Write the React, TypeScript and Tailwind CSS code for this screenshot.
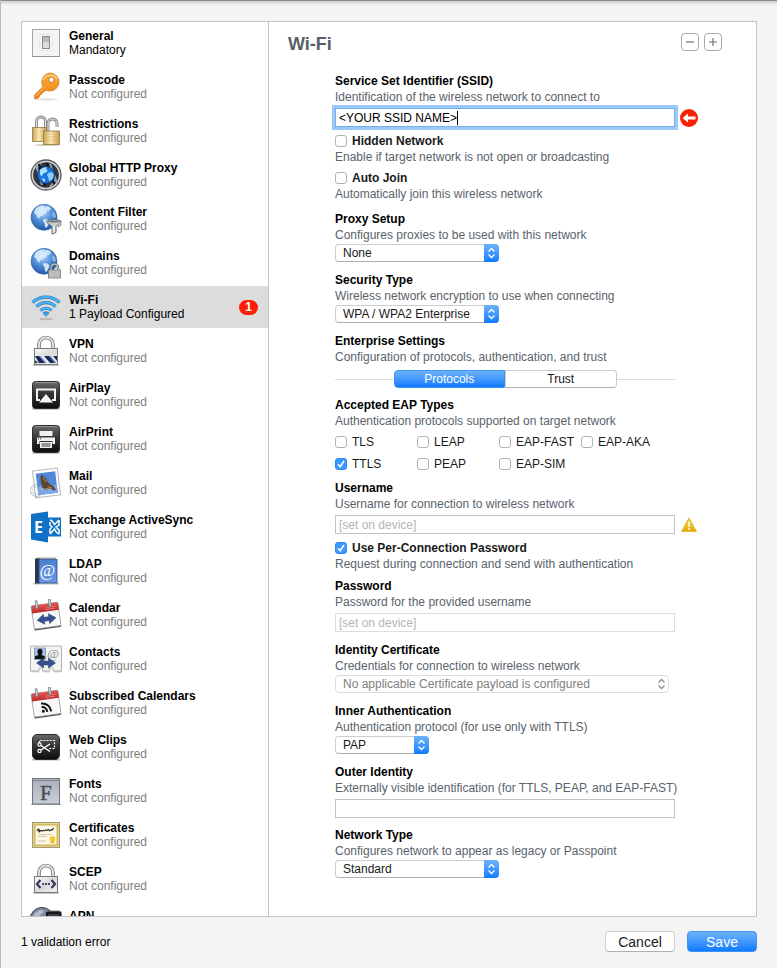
import React, { useState } from 'react';

const Svg = ({ children }: { children: React.ReactNode }) => (
  <svg viewBox="0 0 32 32" className="w-8 h-8 shrink-0" aria-hidden="true">
    {children}
  </svg>
);

// gradients shared by all of the payload icons
const IconDefs = () => (
  <svg className="absolute w-0 h-0" aria-hidden="true">
    <defs>
      <linearGradient id="key" x1="0" y1="0" x2="0" y2="1">
        <stop offset="0" stopColor="#fbb040" />
        <stop offset="1" stopColor="#f07f09" />
      </linearGradient>
      <linearGradient id="brass" x1="0" y1="0" x2="1" y2="0">
        <stop offset="0" stopColor="#c9a256" />
        <stop offset="0.45" stopColor="#fbe9b8" />
        <stop offset="1" stopColor="#c59b50" />
      </linearGradient>
      <linearGradient id="steel" x1="0" y1="0" x2="1" y2="1">
        <stop offset="0" stopColor="#fdfdfd" />
        <stop offset="0.5" stopColor="#d9d9da" />
        <stop offset="1" stopColor="#f4f4f4" />
      </linearGradient>
      <linearGradient id="black" x1="0" y1="0" x2="0" y2="1">
        <stop offset="0" stopColor="#6b6b6b" />
        <stop offset="0.45" stopColor="#353535" />
        <stop offset="1" stopColor="#0c0c0c" />
      </linearGradient>
      <radialGradient id="globe" cx="0.45" cy="0.3" r="0.75">
        <stop offset="0" stopColor="#b5d8f7" />
        <stop offset="0.45" stopColor="#5594dc" />
        <stop offset="1" stopColor="#1a4f9f" />
      </radialGradient>
      <linearGradient id="wifi" x1="0" y1="0" x2="0" y2="1">
        <stop offset="0" stopColor="#2a8fe0" />
        <stop offset="1" stopColor="#53b5f7" />
      </linearGradient>
      <linearGradient id="book" x1="0" y1="0" x2="0" y2="1">
        <stop offset="0" stopColor="#4a7fd0" />
        <stop offset="1" stopColor="#6a9ae6" />
      </linearGradient>
      <linearGradient id="red" x1="0" y1="0" x2="0" y2="1">
        <stop offset="0" stopColor="#e05a58" />
        <stop offset="1" stopColor="#c02a2c" />
      </linearGradient>
      <linearGradient id="fonts" x1="0" y1="0" x2="0" y2="1">
        <stop offset="0" stopColor="#a9b0b9" />
        <stop offset="1" stopColor="#c9ced6" />
      </linearGradient>
      <linearGradient id="warn" x1="0" y1="0" x2="0" y2="1">
        <stop offset="0" stopColor="#fbe04a" />
        <stop offset="1" stopColor="#e3a70c" />
      </linearGradient>
    </defs>
  </svg>
);

const Globe = () => (
  <>
    <circle cx="14" cy="14.3" r="13" fill="url(#globe)" stroke="#2a5fa8" strokeWidth="0.6" />
    <path
      d="M5 6.500c2-2.500 5-4 8-4.300l2 1.300 3-.5 3 2-1 2.500-3 .5-1 2.500-2.500.5-1 2-2.500.5-.5 2-2-1-1.500-3-2-1.500z"
      fill="#e3f1fc"
      opacity="0.8"
    />
    <path d="M14 16l3.500.5 2 2-1 3-2 3.500-1.500-1-.5-4-1.500-2z" fill="#eaf5fd" opacity="0.85" />
    <path d="M23 8l2 2 1 4-2 1-2-3z" fill="#b4d5f3" opacity="0.6" />
  </>
);

const DarkTile = ({ children }: { children: React.ReactNode }) => (
  <Svg>
    <rect x="2" y="29" width="28" height="2" rx="1" fill="#c9c9c9" />
    <rect x="2.500" y="2.500" width="27" height="27" rx="3" fill="url(#black)" stroke="#2c2c2c" />
    <path d="M5 3.500h22" stroke="#a0a0a0" strokeWidth="0.8" />
    {children}
  </Svg>
);

const Padlock = ({ children }: { children: React.ReactNode }) => (
  <Svg>
    <rect x="3" y="29" width="26" height="2" rx="1" fill="#c4c4c4" />
    <path d="M9 14V9.500a7 7 0 0 1 14 0V14" fill="none" stroke="#77797c" strokeWidth="3.600" />
    <path d="M9 14V9.500a7 7 0 0 1 14 0V14" fill="none" stroke="#e4e5e6" strokeWidth="1.800" />
    <rect x="4.500" y="13.500" width="23" height="16" fill="url(#steel)" stroke="#77787a" />
    {children}
  </Svg>
);

const CalendarBase = ({ children }: { children: React.ReactNode }) => (
  <Svg>
    <g transform="rotate(-8 16 16)">
      <rect x="2.500" y="27" width="27" height="3" rx="1" fill="#4d4d4d" />
      <rect x="2.500" y="5" width="27" height="23.500" rx="1" fill="#f8f8f8" stroke="#9a9a9a" strokeWidth="0.8" />
      <path d="M2.500 6a1 1 0 0 1 1-1h25a1 1 0 0 1 1 1v6.500h-27z" fill="url(#red)" />
      <path d="M18 8.500h8M16 10.500h10" stroke="#e58d8b" strokeWidth="0.8" />
      <path d="M8 1.500v6M21.500 1.500v6" stroke="#75848f" strokeWidth="2.800" strokeLinecap="round" />
      <path d="M8 1.500v5.500M21.500 1.500v5.500" stroke="#d5e0e7" strokeWidth="1.200" strokeLinecap="round" />
      {children}
    </g>
  </Svg>
);

const doubleArrow = 'M0 5l7-5v3h5V0l7 5-7 5V7H7v3z';

const icons: Record<string, React.ReactNode> = {
  general: (
    <Svg>
      <rect x="2.500" y="2.500" width="27" height="27" fill="#f3f4f5" stroke="#a3a5a7" />
      <path d="M2 29.500h28" stroke="#8f9193" />
      <rect x="10" y="7.500" width="12" height="16" rx="1" fill="#fdfdfd" stroke="#dcdddd" strokeWidth="0.8" />
      <rect x="12.500" y="9.500" width="7" height="12" fill="#dcdddf" stroke="#85878a" />
      <path d="M13 10h6v5h-6z" fill="#b9bbbf" />
    </Svg>
  ),
  passcode: (
    <Svg>
      <ellipse cx="17" cy="28.500" rx="11" ry="1.200" fill="#e3e3e3" />
      <path
        d="M20 2a9 9 0 0 1 0 18c-1.500 0-3-.3-4-1l-2 2-2 .3-.3 2.200-2.200.3-.2 2.200-1.800 1.500-3 .3.200-4L13 15.500A9 9 0 0 1 20 2z"
        fill="url(#key)"
        stroke="#d07a1a"
        strokeWidth="0.8"
      />
      <path d="M5.500 25.500L14.500 16" stroke="#fcd08a" strokeWidth="0.9" />
      <path d="M13 9a7.500 6 0 0 1 14-1" fill="none" stroke="#fdd594" strokeWidth="1.400" />
      <circle cx="21.500" cy="8.800" r="2.700" fill="#fff" stroke="#c9741a" />
    </Svg>
  ),
  restrictions: (
    <Svg>
      <ellipse cx="17" cy="30" rx="13" ry="1" fill="#d5d0c6" />
      <path d="M6.500 13V6.500a4.500 4.500 0 0 1 9 0V13" fill="none" stroke="#73767c" strokeWidth="2.800" />
      <path d="M6.500 13V6.500a4.500 4.500 0 0 1 9 0V13" fill="none" stroke="#e7e8ea" strokeWidth="1.200" />
      <rect x="2.500" y="12.500" width="14" height="14" fill="url(#brass)" stroke="#9a7b3c" strokeWidth="0.8" />
      <path d="M18 17V8.500a4.500 4.500 0 0 1 9 0V12" fill="none" stroke="#73767c" strokeWidth="2.800" />
      <path d="M18 17V8.500a4.500 4.500 0 0 1 9 0V12" fill="none" stroke="#e7e8ea" strokeWidth="1.200" />
      <rect x="13.500" y="16" width="16" height="13.500" fill="url(#brass)" stroke="#9a7b3c" strokeWidth="0.8" />
      <path d="M14 19h15M14 22h15M14 25h15" stroke="#c8a45c" strokeWidth="0.4" />
    </Svg>
  ),
  proxy: (
    <Svg>
      <circle cx="16" cy="16" r="15" fill="#33373d" stroke="#5a5c5f" strokeWidth="1.300" />
      <circle cx="16" cy="16" r="13.600" fill="none" stroke="#d4d6d8" strokeWidth="1.500" />
      <path d="M6 6l6 20M20 5l7 19M11 4l-5 6M26 20l-6 8" stroke="#9aa2ac" strokeWidth="2" />
      <path d="M9 5l6 22M17 4l7 21" stroke="#10151c" strokeWidth="2.200" />
      <circle cx="16" cy="16" r="8.500" fill="#1976dc" stroke="#0b3a75" />
      <path d="M10 11c2-2 5-3 7-2.500l-1 2 2 1-2 2-3 1-1 3-2-2z" fill="#aee0fd" />
      <path d="M18 14l4-1 2 3-2 5-3 1-1-4-1-2z" fill="#8dcefa" />
      <path d="M12 19l3 1v3l-2-1z" fill="#aee0fd" />
    </Svg>
  ),
  filter: (
    <Svg>
      <Globe />
      <path
        d="M16.500 18.500c0-1 3-1.700 7.500-1.700s7.500.7 7.500 1.700-4 4-5.500 5v6l-4 1.500v-7.500c-1.500-1-5.500-4-5.500-5z"
        fill="#c9cacb"
        stroke="#5d5f61"
        strokeWidth="0.9"
      />
      <ellipse cx="24" cy="18.500" rx="6.300" ry="1" fill="#77797b" />
      <path d="M24 23v6.500" stroke="#fff" strokeWidth="1.200" />
      <path d="M28 23.500c2 0 3-1 3-3" fill="none" stroke="#5d5f61" />
    </Svg>
  ),
  domains: (
    <Svg>
      <Globe />
      <path d="M21 24v-3.500a3.500 3.500 0 0 1 7 0V24" fill="none" stroke="#5f6163" strokeWidth="2.400" />
      <path d="M21 24v-3.500a3.500 3.500 0 0 1 7 0V24" fill="none" stroke="#e0e1e2" strokeWidth="1" />
      <rect x="18.500" y="23" width="12" height="8" fill="#cfd0d1" stroke="#707173" strokeWidth="0.8" />
      <path d="M19 25h11M19 27h11M19 29h11" stroke="#8d8e90" strokeWidth="0.6" />
    </Svg>
  ),
  wifi: (
    <Svg>
      <ellipse cx="16" cy="28" rx="7" ry="1.300" fill="#bcbcbc" />
      <g fill="none" stroke="#1f78bd" strokeWidth="3.200">
        <path d="M2.500 11.500a19.500 19.500 0 0 1 27 0" />
        <path d="M6.500 15.500a13.500 13.500 0 0 1 19 0" />
        <path d="M10.500 19.500a7.800 7.800 0 0 1 11 0" />
      </g>
      <g fill="none" stroke="#50b3f5" strokeWidth="2">
        <path d="M2.700 11.300a19.500 19.500 0 0 1 26.600 0" />
        <path d="M6.700 15.300a13.500 13.500 0 0 1 18.600 0" />
        <path d="M10.700 19.300a7.800 7.800 0 0 1 10.600 0" />
      </g>
      <path d="M12.800 22a4.500 4.500 0 0 1 6.400 0L16 25.500z" fill="url(#wifi)" stroke="#1f78bd" strokeWidth="0.6" />
    </Svg>
  ),
  vpn: (
    <Padlock>
      <rect x="5" y="21" width="22" height="7" fill="#e9eef8" />
      <path d="M5 21h4l6 7H9zM14 21h5l6 7h-5zM23 21h4v5zM5 25l3 3H5z" fill="#1a2a55" />
      <path d="M9 21h1.500l6 7H15zM19 21h1.500l6 7H25z" fill="#5f7cc0" />
    </Padlock>
  ),
  airplay: (
    <DarkTile>
      <path d="M10 21H7V10.500h18V21h-3" fill="none" stroke="#f4f4f4" strokeWidth="2" />
      <path d="M16 15l7 8.500H9z" fill="#f4f4f4" />
    </DarkTile>
  ),
  airprint: (
    <DarkTile>
      <path d="M9.500 8h13v5h-13z" fill="#f0f0f0" />
      <path d="M7 14.500h18v6.500h-2.500v-3h-13v3H7z" fill="#f0f0f0" />
      <path d="M10 19h12v6H10z" fill="#f0f0f0" />
      <path d="M11.500 21h9M11.500 23h9" stroke="#222" strokeWidth="0.9" />
      <path d="M8 15.800h1M10 15.800h1" stroke="#222" />
    </DarkTile>
  ),
  mail: (
    <Svg>
      <g transform="rotate(-7 16 16)">
        <rect x="4" y="2.500" width="25" height="27" fill="#fbfbfb" stroke="#c6c9ce" strokeWidth="1" />
        <rect x="4" y="2.500" width="25" height="27" fill="none" stroke="#9b9fa6" strokeWidth="0.6" strokeDasharray="1.400 1.400" />
        <rect x="7" y="5.500" width="19.500" height="21.500" fill="#5286d8" />
        <path d="M7 19h19.500v8H7z" fill="#7ba8e8" />
        <path d="M12 7c3 2 5 4.500 5.500 7.500l2.500 3.500 3 2 2 4-2 .5-4-2-5 .5-3-3 1.500-1c-2-3-2-7-.5-12z" fill="#5b4630" />
        <path d="M13.500 10l3 5M17 20l5 2" stroke="#a98c62" />
      </g>
      <circle cx="6.500" cy="23.500" r="6" fill="none" stroke="#8f9fb5" strokeWidth="1" opacity="0.7" />
      <circle cx="6.500" cy="23.500" r="4" fill="none" stroke="#8f9fb5" strokeWidth="0.7" opacity="0.6" />
      <path d="M11 22c2-1 3 1 5 0s3 1 5 0" fill="none" stroke="#d5e2f4" strokeWidth="0.7" />
    </Svg>
  ),
  exchange: (
    <Svg>
      <rect x="18" y="6.500" width="13" height="19" fill="#0f72c6" />
      <path d="M20 9c2 0 3 2 4.500 4.500L29 9M29 23c-2 0-3-2-4.500-5L20 23M29 9v5l-3 2 3 3v4M20 11v3l2 2-2 2v4" fill="none" stroke="#fff" strokeWidth="1.500" />
      <path d="M1 3l17-2.500v31L1 28.500z" fill="#0f72c6" />
      <text x="4" y="21.500" fontSize="16" fontWeight="700" fontFamily="Open Sans, sans-serif" fill="#fff">E</text>
    </Svg>
  ),
  ldap: (
    <Svg>
      <rect x="3" y="28" width="26" height="1.500" rx="0.700" fill="#bdbdbd" />
      <path d="M5 4l3-1.500h18V4z" fill="#a5a5a5" />
      <rect x="5" y="3.500" width="4.500" height="25" fill="#2e3746" />
      <rect x="9" y="4.500" width="18" height="23.500" fill="url(#book)" stroke="#2c4f94" strokeWidth="0.8" />
      <text x="9.500" y="20.500" fontSize="17" fontFamily="Liberation Serif, serif" fill="#fff">@</text>
    </Svg>
  ),
  calendar: (
    <CalendarBase>
      <path d={doubleArrow} transform="translate(6.500 15)" fill="#39508f" stroke="#22366c" strokeWidth="0.5" />
    </CalendarBase>
  ),
  contacts: (
    <Svg>
      <path
        d="M.5 3h31v25h-8.500v-3h-3.500v3h-7v-3H9v3H.5z"
        fill="#f4f4f4"
        stroke="#a9a9a9"
        strokeWidth="0.9"
      />
      <path d="M1 28.800h8M13 28.800h6.500M23.500 28.800h8" stroke="#bbb" />
      <rect x="4.500" y="5" width="11" height="11.500" fill="#a9c3e4" stroke="#6d87ac" strokeWidth="0.7" />
      <path d="M7.500 8.500a2.500 2.700 0 0 1 5 0c0 2-.8 2.500-.8 3.500l3 1.300v2.700H5v-2.700L8.300 12c0-1-.8-1.500-.8-3.500z" fill="#0d1014" />
      <text x="17" y="14.500" fontSize="13" fontFamily="Liberation Serif, serif" fill="#8c8c8c">@</text>
      <path d={doubleArrow} transform="translate(6.500 15)" fill="#39508f" stroke="#22366c" strokeWidth="0.5" />
    </Svg>
  ),
  subscribed: (
    <CalendarBase>
      <g fill="none" stroke="#111" strokeWidth="2">
        <path d="M11 19.500a5 5 0 0 1 5 5.500" />
        <path d="M11 15.800a9 9 0 0 1 9 9.200" />
      </g>
      <circle cx="12.200" cy="23.800" r="1.500" fill="#111" />
    </CalendarBase>
  ),
  webclips: (
    <Svg>
      <rect x="2" y="27.500" width="28" height="2" rx="1" fill="#b9b9b9" />
      <rect x="2.500" y="3.500" width="27" height="25" rx="4.500" fill="url(#black)" stroke="#2c2c2c" />
      <path d="M9.500 12v-2.500h15v8h-6" fill="none" stroke="#fff" strokeWidth="1.200" strokeDasharray="2 1.200" />
      <circle cx="9.500" cy="13.500" r="1.600" fill="none" stroke="#fff" strokeWidth="1.200" />
      <circle cx="9.500" cy="20" r="1.600" fill="none" stroke="#fff" strokeWidth="1.200" />
      <path d="M11 14.500l9 6M11 19l9-6" stroke="#fff" strokeWidth="1.500" />
    </Svg>
  ),
  fonts: (
    <Svg>
      <path d="M1 29.500h30" stroke="#a7a7a7" />
      <rect x="2.500" y="3.500" width="27" height="25.500" fill="url(#fonts)" stroke="#6f757d" />
      <path d="M3 5.500h26" stroke="#7c838c" />
      <text x="10" y="24.500" fontSize="21" fontFamily="Liberation Serif, serif" fill="#4b5058" stroke="#4b5058" strokeWidth="0.5">F</text>
    </Svg>
  ),
  certificates: (
    <Svg>
      <rect x="2.500" y="3.500" width="27" height="25" fill="#f4ecc6" stroke="#a49a6e" />
      <rect x="4.500" y="5.500" width="23" height="21" fill="#fdf9e6" stroke="#d2b65d" strokeWidth="2" />
      <path d="M7 12c1.500-3 3-2 2 .3s2-2 2.500-.5 1.500-1.500 2.500-.3 1.500-1.500 2.500-.3 1.500-2 2.500 0 1.500-1.500 2.500-.3 1-2 2.500-1" fill="none" stroke="#22221c" strokeWidth="1.100" />
      <path d="M9 15.500h13M7.500 17.500h9" stroke="#c9c29a" strokeWidth="0.8" />
      <path d="M8 22h8" stroke="#b7ae82" strokeWidth="0.7" />
      <circle cx="22.500" cy="20" r="2.900" fill="#f5ca35" />
      <path d="M21 22l-.7 3 2.200-1 2.200 1-.7-3z" fill="#eab92a" />
    </Svg>
  ),
  scep: (
    <Padlock>
      <path d="M10.500 17L7 21l3.500 4M21.500 17l3.500 4-3.500 4" fill="none" stroke="#33385c" strokeWidth="2.200" />
      <path d="M12.300 21h1.800M15.200 21H17M18.100 21h1.800" stroke="#33385c" strokeWidth="1.800" />
    </Padlock>
  ),
  apn: (
    <Svg>
      <circle cx="12" cy="12.500" r="12" fill="#868ba3" stroke="#30343f" />
      <path d="M4 8c2-3 5-5 8-5l2 2-3 2-3 4-3 1z" fill="#b9bdcd" />
      <rect x="15.500" y="4" width="16" height="26" rx="2.500" fill="#15171b" stroke="#7d7f84" />
      <rect x="18" y="7" width="11" height="18" fill="#3a3e48" />
    </Svg>
  ),
};

const payloads = [
  { icon: 'general', name: 'General', status: 'Mandatory' },
  { icon: 'passcode', name: 'Passcode' },
  { icon: 'restrictions', name: 'Restrictions' },
  { icon: 'proxy', name: 'Global HTTP Proxy' },
  { icon: 'filter', name: 'Content Filter' },
  { icon: 'domains', name: 'Domains' },
  { icon: 'wifi', name: 'Wi-Fi', status: '1 Payload Configured', errors: 1 },
  { icon: 'vpn', name: 'VPN' },
  { icon: 'airplay', name: 'AirPlay' },
  { icon: 'airprint', name: 'AirPrint' },
  { icon: 'mail', name: 'Mail' },
  { icon: 'exchange', name: 'Exchange ActiveSync' },
  { icon: 'ldap', name: 'LDAP' },
  { icon: 'calendar', name: 'Calendar' },
  { icon: 'contacts', name: 'Contacts' },
  { icon: 'subscribed', name: 'Subscribed Calendars' },
  { icon: 'webclips', name: 'Web Clips' },
  { icon: 'fonts', name: 'Fonts' },
  { icon: 'certificates', name: 'Certificates' },
  { icon: 'scep', name: 'SCEP' },
  { icon: 'apn', name: 'APN' },
];

const Sidebar = () => {
  const [selected, setSelected] = useState('Wi-Fi');

  return (
    <nav className="w-[247px] shrink-0 overflow-hidden border-r border-[#c4c4c4]">
      <ul>
        {payloads.map(({ icon, name, status, errors }) => (
          <li key={name} className="mb-0.5">
            <button
              type="button"
              onClick={() => setSelected(name)}
              className={`flex h-[42px] w-full items-center gap-[7px] pl-2 pr-2.5 text-left ${
                selected === name ? 'bg-[#dcdcdc]' : ''
              }`}
            >
              {icons[icon]}
              <span className="flex-1 leading-[14px]">
                <span className="block font-bold">{name}</span>
                <span className={status ? 'block' : 'block text-[#808080]'}>{status ?? 'Not configured'}</span>
              </span>
              {errors && (
                <span className="h-[15px] w-[19px] rounded-full bg-[#fb1f08] text-center font-bold leading-[15px] text-white">
                  {errors}
                </span>
              )}
            </button>
          </li>
        ))}
      </ul>
    </nav>
  );
};

interface FieldProps {
  id?: string;
  label: string;
  description: string;
  className?: string;
  children?: React.ReactNode;
}

const Field = ({ id, label, description, className = 'mt-2.5', children }: FieldProps) => (
  <div className={className}>
    {id ? (
      <label htmlFor={id} className="block font-bold">{label}</label>
    ) : (
      <h3 className="font-bold">{label}</h3>
    )}
    <p className="text-[#59636b]">{description}</p>
    {children}
  </div>
);

interface CheckboxProps {
  id: string;
  label: string;
  bold?: boolean;
  defaultChecked?: boolean;
}

const Checkbox = ({ id, label, bold, defaultChecked }: CheckboxProps) => (
  <div className="flex items-center gap-[5px]">
    <span className="relative flex">
      <input
        id={id}
        type="checkbox"
        defaultChecked={defaultChecked}
        className="peer h-3 w-3 appearance-none rounded-[3px] border border-[#b4b4b4] bg-white checked:border-[#2f8bf5] checked:bg-[#3b99fc]"
      />
      <svg viewBox="0 0 12 12" className="pointer-events-none absolute inset-0 hidden peer-checked:block" aria-hidden="true">
        <path d="M3 6.300l2.200 2.400L9 3" fill="none" stroke="#fff" strokeWidth="1.600" />
      </svg>
    </span>
    <label htmlFor={id} className={bold ? 'font-bold text-[#1a1a1a]' : 'text-[#1a1a1a]'}>{label}</label>
  </div>
);

interface SelectProps {
  id: string;
  options: string[];
  className: string;
  disabled?: boolean;
}

const Select = ({ id, options, className, disabled }: SelectProps) => (
  <div className={`relative mt-px ${className}`}>
    <select
      id={id}
      disabled={disabled}
      className="block h-[18px] w-full appearance-none rounded-[4px] border border-[#cdcdcd] border-b-[#b0b0b0] bg-white pl-[7px] pr-5 leading-4 text-[#1a1a1a] disabled:border-[#dcdcdc] disabled:text-[#808080] disabled:opacity-100"
    >
      {options.map((option) => (
        <option key={option}>{option}</option>
      ))}
    </select>
    <span
      className={`pointer-events-none absolute inset-y-0 right-0 flex w-[15px] items-center justify-center rounded-r-[4px] ${
        disabled ? 'text-[#8c8c8c]' : 'bg-linear-to-b from-[#6bb3fa] to-[#0a7aff] text-white'
      }`}
    >
      <svg viewBox="0 0 9 12" className="h-3 w-[9px]" fill="none" stroke="currentColor" strokeWidth="1.300" aria-hidden="true">
        <path d="M1.500 4.500l3-3 3 3M1.500 7.500l3 3 3-3" />
      </svg>
    </span>
  </div>
);

interface TextInputProps {
  id: string;
  defaultValue?: string;
  placeholder?: string;
  className?: string;
}

const TextInput = ({ id, className = 'border-[#c4c4c4]', ...rest }: TextInputProps) => (
  <input
    id={id}
    type="text"
    className={`block h-[19px] w-full border bg-white px-[3px] leading-4 outline-none placeholder:text-[#b5b5b5] ${className}`}
    {...rest}
  />
);

const eapTypes = ['TLS', 'LEAP', 'EAP-FAST', 'EAP-AKA', 'TTLS', 'PEAP', 'EAP-SIM'];

const WifiPayload = () => {
  const [tab, setTab] = useState('Protocols');

  return (
    <main className="min-w-0 flex-1 overflow-hidden pb-[38px] pl-[19px] pr-[34px] pt-[11px]">
      <div className="flex items-start justify-between">
        <h2 className="text-[18px] font-bold leading-[22px] text-[#566068]">Wi-Fi</h2>
        <div className="flex gap-[5px]">
          {['Remove payload', 'Add payload'].map((action, index) => (
            <button
              key={action}
              type="button"
              aria-label={action}
              className="flex h-[18px] w-[18px] items-center justify-center rounded-[4px] border border-[#a9a9a9] bg-white"
            >
              <svg viewBox="0 0 10 10" className="h-2.5 w-2.5" stroke="#6e6e6e" strokeWidth="1.200" aria-hidden="true">
                <path d={index ? 'M1 5h8M5 1v8' : 'M1 5h8'} />
              </svg>
            </button>
          ))}
        </div>
      </div>

      <form className="ml-[47px] mt-[18px]">
        <Field id="ssid" label="Service Set Identifier (SSID)" description="Identification of the wireless network to connect to" className="">
          <div className="mt-[3px] flex items-center gap-[5px]">
            <div className="relative w-full max-w-[340px]">
              <TextInput id="ssid" defaultValue="<YOUR SSID NAME>" className="border-[#78aeea] ring-3 ring-[#9cc9fb]" />
              <span className="absolute left-[122px] top-[3px] h-3.5 w-px bg-black" />
            </div>
            <svg viewBox="0 0 18 18" className="-my-1 h-[18px] w-[18px] shrink-0" role="img" aria-label="Error">
              <circle cx="9" cy="9" r="9" fill="#fb1f08" />
              <path d="M2.500 9l5.500-4.500V7.500h7.500v3H8v3z" fill="#fff" />
            </svg>
          </div>
        </Field>

        <div className="mt-1.5">
          <Checkbox id="hidden" label="Hidden Network" bold />
          <p className="text-[#59636b]">Enable if target network is not open or broadcasting</p>
        </div>
        <div className="mt-[5px]">
          <Checkbox id="auto-join" label="Auto Join" bold />
          <p className="text-[#59636b]">Automatically join this wireless network</p>
        </div>

        <Field id="proxy-setup" label="Proxy Setup" description="Configures proxies to be used with this network" className="mt-[9px]">
          <Select id="proxy-setup" options={['None', 'Manual', 'Automatic']} className="w-[164px]" />
        </Field>
        <Field id="security" label="Security Type" description="Wireless network encryption to use when connecting">
          <Select id="security" options={['WPA / WPA2 Enterprise', 'WEP', 'None']} className="w-[164px]" />
        </Field>

        <Field label="Enterprise Settings" description="Configuration of protocols, authentication, and trust">
          <div className="mt-[5px] flex max-w-[340px] items-center">
            <span className="h-px flex-1 bg-[#dcdcdc]" />
            <div className="flex h-[18px] w-[223px]">
              {['Protocols', 'Trust'].map((name) => (
                <button
                  key={name}
                  type="button"
                  onClick={() => setTab(name)}
                  className={`flex-1 border leading-4 first:rounded-l-[4px] last:rounded-r-[4px] ${
                    tab === name
                      ? 'border-[#3f93f0] bg-linear-to-b from-[#6bb3fa] to-[#0a7aff] text-white'
                      : 'border-[#cdcdcd] border-b-[#b0b0b0] bg-white text-[#1a1a1a]'
                  }`}
                >
                  {name}
                </button>
              ))}
            </div>
            <span className="h-px flex-1 bg-[#dcdcdc]" />
          </div>
        </Field>

        <Field label="Accepted EAP Types" description="Authentication protocols supported on target network" className="mt-[9px]">
          <div className="mt-[5px] grid grid-cols-[repeat(4,82px)] gap-y-1.5">
            {eapTypes.map((type) => (
              <Checkbox key={type} id={type} label={type} defaultChecked={type === 'TTLS'} />
            ))}
          </div>
        </Field>

        <Field id="username" label="Username" description="Username for connection to wireless network" className="mt-2">
          <div className="mt-[3px] flex items-center gap-[5px]">
            <div className="w-full max-w-[340px]">
              <TextInput id="username" placeholder="[set on device]" />
            </div>
            <svg viewBox="0 0 18 18" className="-my-1 h-[18px] w-[18px] shrink-0" role="img" aria-label="Warning">
              <path d="M9 2.200L16.300 15.500H1.700z" fill="url(#warn)" stroke="#e6b82a" strokeWidth="1.200" strokeLinejoin="round" />
              <path d="M9 6v5M9 12.200v1.800" stroke="#fffbe0" strokeWidth="1.800" />
            </svg>
          </div>
        </Field>

        <div className="mt-1.5">
          <Checkbox id="per-connection" label="Use Per-Connection Password" bold defaultChecked />
          <p className="text-[#59636b]">Request during connection and send with authentication</p>
        </div>

        <Field id="password" label="Password" description="Password for the provided username" className="mt-1.5">
          <div className="mt-[3px] max-w-[340px]">
            <TextInput id="password" placeholder="[set on device]" className="border-[#dedede]" />
          </div>
        </Field>

        <Field id="certificate" label="Identity Certificate" description="Credentials for connection to wireless network">
          <Select id="certificate" options={['No applicable Certificate payload is configured']} className="max-w-[334px]" disabled />
        </Field>
        <Field id="inner-auth" label="Inner Authentication" description="Authentication protocol (for use only with TTLS)">
          <Select id="inner-auth" options={['PAP', 'CHAP', 'MSCHAP']} className="w-[94px]" />
        </Field>
        <Field id="outer-identity" label="Outer Identity" description="Externally visible identification (for TTLS, PEAP, and EAP-FAST)">
          <div className="mt-[3px] max-w-[340px]">
            <TextInput id="outer-identity" />
          </div>
        </Field>
        <Field id="network-type" label="Network Type" description="Configures network to appear as legacy or Passpoint" className="mt-[9px]">
          <Select id="network-type" options={['Standard', 'Legacy', 'Passpoint']} className="w-[164px]" />
        </Field>
      </form>
    </main>
  );
};

export default function App() {
  return (
    <div className="flex h-screen flex-col border-l border-[#b9b9b9] bg-[#f4f4f4] font-['Liberation_Sans',Arial,sans-serif] text-[12px] leading-4 text-black">
      <IconDefs />
      <div className="h-[5px] shrink-0 border-t border-[#8c8a8c] bg-linear-to-b from-[#cfcfcf] to-[#f4f4f4]" />
      <div className="mx-5 mt-4 flex min-h-0 flex-1 border border-[#c4c4c4] bg-white">
        <Sidebar />
        <WifiPayload />
      </div>
      <footer className="flex shrink-0 items-center gap-3 px-5 pb-4 pt-3.5">
        <p className="flex-1">1 validation error</p>
        <button
          type="button"
          className="h-[21px] w-[70px] rounded-[4px] border border-[#cdcdcd] border-b-[#b0b0b0] bg-white text-[14px] leading-[18px] text-[#1a1a1a]"
        >
          Cancel
        </button>
        <button
          type="button"
          className="h-[21px] w-[70px] rounded-[4px] border border-[#3f93f0] bg-linear-to-b from-[#6bb3fa] to-[#0a7aff] text-[14px] leading-[18px] text-white"
        >
          Save
        </button>
      </footer>
    </div>
  );
}
